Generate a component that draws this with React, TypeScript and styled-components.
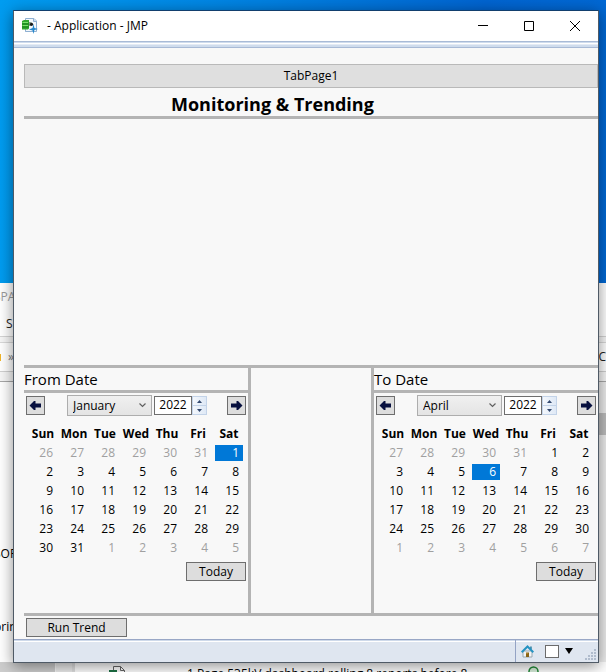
import React, { useState } from "react";
import styled, { createGlobalStyle } from "styled-components";

const GlobalStyle = createGlobalStyle`
  *, *::before, *::after { box-sizing: border-box; }
  body { margin: 0; }
  body, button, input, select {
    font-family: "Open Sans", "Noto Sans", sans-serif;
    font-size: 12px;
    line-height: 16px;
    color: #000;
  }
`;

const rule = "#b4b4b4";

/* ---------- desktop and the window behind ---------- */

const Desktop = styled.div`
  position: relative;
  display: flex;
  min-height: 100vh;
  padding: 10px 7px 9px 13px;
  overflow: hidden;
  background: linear-gradient(90deg, #009cf0 0%, #0086e4 35%, #0064d0 80%, #0068d4 100%);
`;

const BackWindow = styled.div`
  position: absolute;
  inset: 283px 0 0 -6px;
  display: flex;
  flex-direction: column;
  overflow: hidden;
  background: #fff;
  white-space: nowrap;
`;

const BackRow = styled.div<{ $h: number; $line?: string; $muted?: boolean; $bg?: string }>`
  display: flex;
  flex: none;
  align-items: center;
  justify-content: space-between;
  height: ${(p) => p.$h}px;
  border-bottom: 1px solid ${(p) => p.$line || "transparent"};
  background: ${(p) => p.$bg || "#fff"};
  color: ${(p) => (p.$muted ? "#9a9a9a" : "#222")};
`;

const Indent = styled.span`
  padding-left: 12px;
`;

const Crumb = styled.span`
  display: flex;
  align-items: center;
  gap: 7px;
  padding-left: 6px;
  color: #777;
  &::before {
    content: "";
    width: 1px;
    height: 7px;
    background: #f0b429;
  }
`;

const BackBody = styled.div`
  display: flex;
  flex: 1;
  justify-content: space-between;
  min-height: 0;
`;

const BackTree = styled.div`
  display: flex;
  flex-direction: column;
  justify-content: flex-end;
  gap: 57px;
  padding-bottom: 27px;
`;

const ScrollTrack = styled.div`
  width: 8px;
  padding-top: 31px;
  background: #ededed;
  &::before {
    content: "";
    display: block;
    height: 22px;
    background: #bdbdbd;
  }
`;

const BackFooter = styled.div`
  display: flex;
  flex: none;
  height: 10px;
  overflow: hidden;
  background: #fff;
`;

const FooterThumb = styled.div`
  flex: none;
  width: 61px;
  background: #cdcdcd;
`;

const FooterGap = styled.div`
  flex: none;
  width: 20px;
  border-left: 1px solid #f6f6f6;
  border-right: 3px solid #e0e0e0;
  background: #ececec;
`;

const FooterItem = styled.div`
  display: flex;
  flex: 1;
  align-items: flex-start;
  min-width: 0;
  padding: 4px 72px 0 34px;
  gap: 61px;
  svg { flex: none; }
  span { flex: 1; }
`;

/* ---------- application window ---------- */

const Frame = styled.main`
  position: relative;
  display: flex;
  flex: 1;
  flex-direction: column;
  min-width: 0;
  border: 1px solid #4f5a66;
  border-top-color: #123f6e;
  background: #f8f8f8;
  box-shadow: 0 3px 14px rgba(0, 0, 0, 0.45);
`;

const TitleBar = styled.header`
  display: flex;
  align-items: center;
  height: 30px;
  padding-left: 8px;
  background: #fff;
`;

const Title = styled.h1`
  flex: 1;
  margin: 0 0 0 9px;
  font-size: 12px;
  font-weight: 400;
`;

const CaptionButton = styled.button`
  display: flex;
  align-items: center;
  justify-content: center;
  width: 46px;
  height: 30px;
  padding: 0;
  border: 0;
  background: none;
`;

const Band = styled.div`
  height: 7px;
  border-top: 1px solid #a8bad6;
  border-bottom: 1px solid #a8bad6;
  background: linear-gradient(#cfdced 0 1px, #fff 1px 2px, #e4ebf5 2px 3px, #cfdced 3px);
`;

const Content = styled.div`
  display: flex;
  flex: 1;
  flex-direction: column;
  padding: 16px 0 1px 10px;
`;

const TabButton = styled.button`
  height: 24px;
  padding: 0;
  border: 1px solid #b9b9b9;
  background: #dfdfdf;
`;

const Heading = styled.h2`
  margin: 0;
  padding: 4px 0 0 147px;
  border-bottom: 3px solid ${rule};
  font-size: 18px;
  line-height: 24px;
`;

const Blank = styled.div`
  flex: 1;
  min-height: 120px;
`;

const Panels = styled.div`
  display: grid;
  grid-template-columns: 227px 1fr 227px;
  border-top: 3px solid ${rule};
  border-bottom: 3px solid ${rule};
`;

const Panel = styled.section<{ $side: "left" | "right" }>`
  height: 245px;
  border-${(p) => (p.$side === "left" ? "right" : "left")}: 3px solid ${rule};
`;

const PanelTitle = styled.h3`
  height: 25px;
  margin: 0;
  border-bottom: 3px solid ${rule};
  font-size: 15px;
  font-weight: 400;
  line-height: 23px;
`;

const Picker = styled.div`
  display: flex;
  flex-direction: column;
  padding: 2px 2px 0;
`;

const PickerBar = styled.div`
  display: flex;
  align-items: center;
  height: 21px;
`;

const ClassicButton = styled.button<{ $w: number }>`
  display: flex;
  align-items: center;
  justify-content: center;
  width: ${(p) => p.$w}px;
  height: 19px;
  padding: 0;
  border: 1px solid #6e6e6e;
  background: #dddddd;
`;

const TodayRow = styled.div`
  display: flex;
  justify-content: flex-end;
  padding-top: 5px;
`;

const MonthWrap = styled.label`
  display: grid;
  align-items: center;
  width: 85px;
  height: 21px;
  margin-left: 22px;
  svg {
    grid-area: 1 / 1;
    justify-self: end;
    margin-right: 6px;
    pointer-events: none;
  }
`;

const MonthSelect = styled.select`
  grid-area: 1 / 1;
  width: 100%;
  height: 21px;
  padding: 0 0 0 5px;
  border: 1px solid #adadad;
  border-radius: 0;
  background: linear-gradient(#f0f0f0, #e4e4e4);
  appearance: none;
`;

const YearInput = styled.input`
  width: 38px;
  height: 19px;
  margin-left: 2px;
  padding: 0 0 2px;
  border: 1px solid #6e6e6e;
  background: #fff;
  text-align: center;
`;

const Spinner = styled.div`
  display: flex;
  flex: 1;
  flex-direction: column;
  align-items: flex-start;
`;

const SpinButton = styled.button`
  display: flex;
  align-items: center;
  justify-content: center;
  width: 15px;
  height: 10px;
  padding: 0;
  border: 1px solid #c3d3e8;
  background: linear-gradient(90deg, #f3f7fc, #dfe9f6);
  & + & { height: 9px; border-top: 0; }
`;

const Calendar = styled.table`
  width: 217px;
  margin: 8px 0 0 3px;
  border-collapse: collapse;
  table-layout: fixed;
  th, td { height: 19px; padding: 0; }
  th { padding-right: 3px; font-weight: 700; text-align: center; }
`;

const Day = styled.span<{ $muted: boolean; $selected: boolean }>`
  display: block;
  width: 28px;
  padding-right: 4px;
  line-height: 16px;
  text-align: right;
  color: ${(p) => (p.$selected ? "#fff" : p.$muted ? "#a0a0a0" : "#000")};
  background: ${(p) => (p.$selected ? "#0078d7" : "none")};
`;

const RunRow = styled.div`
  padding: 2px 2px 1px;
`;

const StatusBar = styled.footer`
  display: flex;
  justify-content: flex-end;
  height: 23px;
  border-top: 1px solid #99a7c6;
  background: linear-gradient(#cfdaea 0 1px, #fff 1px 2px, #dfe6f0 2px);
`;

const StatusTools = styled.div`
  display: flex;
  align-items: center;
  width: 83px;
  margin: 0;
  padding-left: 5px;
  border-left: 1px solid #94a3c4;
`;

const IconButton = styled.button`
  display: flex;
  padding: 0;
  border: 0;
  background: none;
`;

const StatusCheck = styled.input`
  width: 14px;
  height: 13px;
  margin: 0 6px 0 11px;
  border: 1px solid #6b6b6b;
  background: #fff;
  appearance: none;
`;

const Grip = styled.svg`
  align-self: flex-end;
  margin: 0 2px 2px auto;
`;

const months = ["January", "February", "March", "April", "May", "June", "July", "August", "September", "October", "November", "December"];
const weekdays = ["Sun", "Mon", "Tue", "Wed", "Thu", "Fri", "Sat"];

function AppIcon() {
  return (
    <svg width="16" height="16" viewBox="0 0 16 16" aria-hidden="true">
      <path d="M3.500.5h8.500l2.500 2.500v10.500h-11z" fill="#f3f7fb" stroke="#8fb0d2" />
      <path d="M11.500 .5v3h3" fill="#c9dcf0" stroke="#8fb0d2" />
      <path d="M7 4h2l1.500 1.500L9 8H7z" fill="#8aa08a" />
      <path d="M0 3l2-1h5v8.500l-1 1H0z" fill="#2fa52d" />
      <path d="M0.500 4.500h5.500M0.500 7.500h5.500" stroke="#7be06c" />
      <path d="M0 6h7M0 9h7" stroke="#14801b" />
      <circle cx="9.500" cy="6.300" r="1.600" fill="#1b1b1b" />
      <path d="M11.500 6l.9 4 3.600 1-3.600 1-.9 4-.9-3.500L7 11.500l3.600-1.500z" fill="#2487cc" />
      <path d="M3.500 13.500h4" stroke="#8fb0d2" />
    </svg>
  );
}

function ArrowIcon({ right }: { right?: boolean }) {
  return (
    <svg width="13" height="9" viewBox="0 0 13 9" aria-hidden="true">
      <path
        d={right ? "M1 2.500h5.500V0H8l4.500 4.500L8 9H6.500V6.500H1z" : "M12 2.500H6.500V0H5L.5 4.500 5 9h1.500V6.500H12z"}
        fill="#07103f"
      />
    </svg>
  );
}

function HouseIcon() {
  return (
    <svg width="13" height="13" viewBox="0 0 13 13" aria-hidden="true">
      <path d="M2 6h9v6H2z" fill="#f2f4f5" stroke="#9aa8b0" />
      <path d="M9.200 1.500h1.500v3H9.200z" fill="#287a9e" />
      <path d="M.7 7.300L6.500 1.500l5.800 5.800" fill="none" stroke="#2593c2" strokeWidth="2" />
      <path d="M5 7.500h3V12H5z" fill="#8a6414" />
      <path d="M5.500 8h1v1h-1z" fill="#c79c3c" />
    </svg>
  );
}

interface CalendarProps {
  side: "left" | "right";
  title: string;
  initialMonth: number;
  firstShown: number;
  previousLength: number;
  length: number;
  selected: number;
}

function DatePanel({ side, title, initialMonth, firstShown, previousLength, length, selected }: CalendarProps) {
  const [month, setMonth] = useState(initialMonth);
  const [year, setYear] = useState(2022);
  const lead = previousLength - firstShown + 1;
  const cells = Array.from({ length: 42 }, (_, i) => {
    const n = i - lead + 1;
    if (n < 1) return { label: previousLength + n, muted: true };
    if (n > length) return { label: n - length, muted: true };
    return { label: n, muted: false };
  });
  return (
    <Panel $side={side} aria-label={title}>
      <PanelTitle>{title}</PanelTitle>
      <Picker>
        <PickerBar>
          <ClassicButton $w={19} aria-label="Previous month" onClick={() => setMonth((month + 11) % 12)}>
            <ArrowIcon />
          </ClassicButton>
          <MonthWrap>
            <MonthSelect aria-label={`${title} month`} value={month} onChange={(e) => setMonth(Number(e.target.value))}>
              {months.map((m, i) => (
                <option key={m} value={i}>{m}</option>
              ))}
            </MonthSelect>
            <svg width="7" height="5" viewBox="0 0 7 5" aria-hidden="true">
              <path d="M.5.5l3 3 3-3" fill="none" stroke="#606060" strokeWidth="1.200" />
            </svg>
          </MonthWrap>
          <YearInput aria-label={`${title} year`} value={year} onChange={(e) => setYear(Number(e.target.value) || 0)} />
          <Spinner>
            <SpinButton aria-label="Next year" onClick={() => setYear(year + 1)}>
              <svg width="5" height="3" aria-hidden="true"><path d="M0 3l2.500-3L5 3z" fill="#33496f" /></svg>
            </SpinButton>
            <SpinButton aria-label="Previous year" onClick={() => setYear(year - 1)}>
              <svg width="5" height="3" aria-hidden="true"><path d="M0 0l2.500 3L5 0z" fill="#33496f" /></svg>
            </SpinButton>
          </Spinner>
          <ClassicButton $w={19} aria-label="Next month" onClick={() => setMonth((month + 1) % 12)}>
            <ArrowIcon right />
          </ClassicButton>
        </PickerBar>
        <Calendar>
          <thead>
            <tr>{weekdays.map((d) => <th key={d} scope="col">{d}</th>)}</tr>
          </thead>
          <tbody>
            {[0, 1, 2, 3, 4, 5].map((w) => (
              <tr key={w}>
                {cells.slice(w * 7, w * 7 + 7).map((c, i) => (
                  <td key={i}>
                    <Day $muted={c.muted} $selected={!c.muted && c.label === selected}>{c.label}</Day>
                  </td>
                ))}
              </tr>
            ))}
          </tbody>
        </Calendar>
        <TodayRow>
          <ClassicButton $w={60}>Today</ClassicButton>
        </TodayRow>
      </Picker>
    </Panel>
  );
}

export default function App() {
  return (
    <>
      <GlobalStyle />
      <Desktop>
        <BackWindow aria-hidden="true">
          <BackRow $h={28} $muted>SPA</BackRow>
          <BackRow $h={26} $line="#d4d4d4"><Indent>SI</Indent></BackRow>
          <BackRow $h={6} $line="#d9d9d9" $bg="#f6f6f6" />
          <BackRow $h={29} $line="#d0d0d0"><Crumb>»</Crumb><span>C</span></BackRow>
          <BackRow $h={10} $line="#a8a8a8" $bg="#f6f6f6" />
          <BackBody>
            <BackTree>
              <span>SOP</span>
              <span>prin</span>
            </BackTree>
            <ScrollTrack />
          </BackBody>
          <BackFooter>
            <FooterThumb />
            <FooterGap />
            <FooterItem>
              <svg width="17" height="16" viewBox="0 0 17 16">
                <path d="M4.500.5h7l4 4v11h-11z" fill="#fff" stroke="#666" />
                <path d="M11.500.5v4h4" fill="none" stroke="#666" />
                <path d="M0 4h8v8H0z" fill="#1d7245" />
              </svg>
              <span>1 Page 535kV dashboard rolling 8 reports before 8</span>
              <svg width="11" height="11" viewBox="0 0 11 11">
                <circle cx="5.500" cy="5.500" r="4.500" fill="#d9f0dc" stroke="#1f8a35" strokeWidth="1.500" />
              </svg>
            </FooterItem>
          </BackFooter>
        </BackWindow>

        <Frame>
          <TitleBar>
            <AppIcon />
            <Title>- Application - JMP</Title>
            <CaptionButton aria-label="Minimize">
              <svg width="10" height="10"><path d="M0 4.500h10" stroke="#000" /></svg>
            </CaptionButton>
            <CaptionButton aria-label="Maximize">
              <svg width="10" height="10"><path d="M.5.5h9v9h-9z" fill="none" stroke="#000" /></svg>
            </CaptionButton>
            <CaptionButton aria-label="Close">
              <svg width="10" height="10"><path d="M0 0l10 10M10 0L0 10" stroke="#000" /></svg>
            </CaptionButton>
          </TitleBar>
          <Band />
          <Content>
            <TabButton>TabPage1</TabButton>
            <Heading>Monitoring &amp; Trending</Heading>
            <Blank />
            <Panels>
              <DatePanel side="left" title="From Date" initialMonth={0} firstShown={26} previousLength={31} length={31} selected={1} />
              <div />
              <DatePanel side="right" title="To Date" initialMonth={3} firstShown={27} previousLength={31} length={30} selected={6} />
            </Panels>
            <RunRow>
              <ClassicButton $w={101}>Run Trend</ClassicButton>
            </RunRow>
          </Content>
          <StatusBar>
            <StatusTools>
              <IconButton aria-label="Home"><HouseIcon /></IconButton>
              <StatusCheck type="checkbox" aria-label="Show window in list" />
              <IconButton aria-label="Window options">
                <svg width="8" height="6"><path d="M0 0h8L4 6z" fill="#000" /></svg>
              </IconButton>
              <Grip width="11" height="11" viewBox="0 0 11 11" aria-hidden="true">
                <g fill="#b0bccd">
                  <path d="M9 0h2v2H9zM9 3h2v2H9zM9 6h2v2H9zM9 9h2v2H9zM6 3h2v2H6zM6 6h2v2H6zM6 9h2v2H6zM3 6h2v2H3zM3 9h2v2H3zM0 9h2v2H0z" />
                </g>
              </Grip>
            </StatusTools>
          </StatusBar>
        </Frame>
      </Desktop>
    </>
  );
}
